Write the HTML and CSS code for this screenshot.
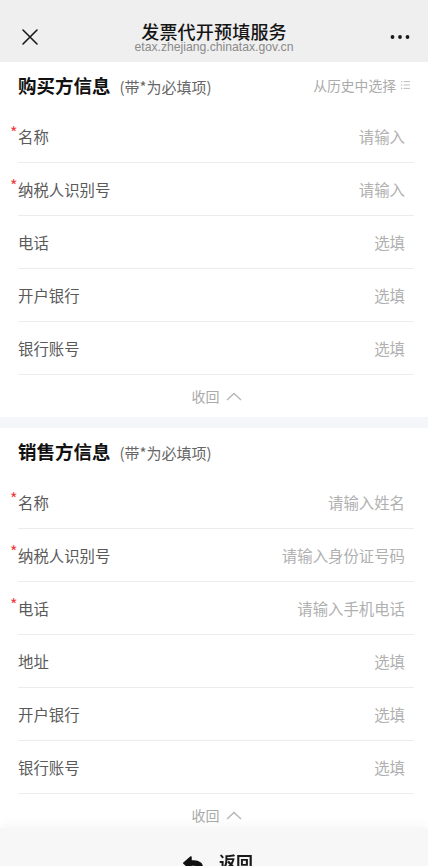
FILE: index.html
```html
<!DOCTYPE html>
<html lang="zh-CN">
<head>
<meta charset="utf-8">
<meta name="viewport" content="width=device-width, initial-scale=1">
<title>发票代开预填服务</title>
<link rel="stylesheet" href="styles.css">
</head>
<body>
<header class="topbar">
  <div class="topbar-btn">
    <svg width="18" height="18" viewBox="0 0 18 18"><path d="M2 2L16 16M16 2L2 16" stroke="#1a1a1a" stroke-width="1.6" stroke-linecap="round"/></svg>
  </div>
  <div class="topbar-title">
    <div class="title">发票代开预填服务</div>
    <div class="url">etax.zhejiang.chinatax.gov.cn</div>
  </div>
  <div class="topbar-btn right">
    <svg width="20" height="6" viewBox="0 0 20 6"><circle cx="2.5" cy="3" r="1.9" fill="#1a1a1a"/><circle cx="10" cy="3" r="1.9" fill="#1a1a1a"/><circle cx="17.5" cy="3" r="1.9" fill="#1a1a1a"/></svg>
  </div>
</header>

<main>
  <section class="card">
    <div class="card-head">
      <div class="head-left"><span class="head-title">购买方信息</span><span class="head-note">(带*为必填项)</span></div>
      <div class="history">从历史中选择
        <svg width="9" height="10" viewBox="0 0 9 10"><g fill="#bdbdbd"><rect x="0" y="1" width="1.2" height="1.2"/><rect x="0" y="4.4" width="1.2" height="1.2"/><rect x="0" y="7.8" width="1.2" height="1.2"/><rect x="2.6" y="1.1" width="6.4" height="1"/><rect x="2.6" y="4.5" width="6.4" height="1"/><rect x="2.6" y="7.9" width="6.4" height="1"/></g></svg>
      </div>
    </div>
    <div class="row"><span class="label"><i class="req">*</i>名称</span><span class="ph">请输入</span></div>
    <div class="row"><span class="label"><i class="req">*</i>纳税人识别号</span><span class="ph">请输入</span></div>
    <div class="row"><span class="label">电话</span><span class="ph">选填</span></div>
    <div class="row"><span class="label">开户银行</span><span class="ph">选填</span></div>
    <div class="row"><span class="label">银行账号</span><span class="ph">选填</span></div>
    <div class="collapse">收回
      <svg width="16" height="9" viewBox="0 0 16 9"><path d="M1 8L8 1.5L15 8" fill="none" stroke="#b5b5b5" stroke-width="1.3"/></svg>
    </div>
  </section>

  <div class="gap"></div>

  <section class="card">
    <div class="card-head">
      <div class="head-left"><span class="head-title">销售方信息</span><span class="head-note">(带*为必填项)</span></div>
    </div>
    <div class="row"><span class="label"><i class="req">*</i>名称</span><span class="ph">请输入姓名</span></div>
    <div class="row"><span class="label"><i class="req">*</i>纳税人识别号</span><span class="ph">请输入身份证号码</span></div>
    <div class="row"><span class="label"><i class="req">*</i>电话</span><span class="ph">请输入手机电话</span></div>
    <div class="row"><span class="label">地址</span><span class="ph">选填</span></div>
    <div class="row"><span class="label">开户银行</span><span class="ph">选填</span></div>
    <div class="row"><span class="label">银行账号</span><span class="ph">选填</span></div>
    <div class="collapse">收回
      <svg width="16" height="9" viewBox="0 0 16 9"><path d="M1 8L8 1.5L15 8" fill="none" stroke="#b5b5b5" stroke-width="1.3"/></svg>
    </div>
  </section>
</main>

<footer class="bottombar">
  <div class="back">
    <svg width="20" height="20" viewBox="0 0 512 512"><path fill="#111" d="M8.309 189.836L184.313 37.851C199.719 24.546 224 35.347 224 56.015v80.053c160.629 1.839 288 34.032 288 186.258 0 61.441-39.581 122.309-83.333 154.132-13.653 9.931-33.111-2.533-28.077-18.631 45.344-145.012-21.507-183.510-176.590-185.742V360c0 20.7-24.3 31.453-39.687 18.164l-176.004-152c-11.071-9.562-11.086-26.753 0-36.328z"/></svg>
    <span class="back-text">返回</span>
  </div>
</footer>
</body>
</html>
```

FILE: styles.css
```css
* { box-sizing: border-box; }
html, body { margin: 0; padding: 0; }
body {
  background: #ffffff;
  font-family: "Noto Sans CJK SC", "Noto Sans", sans-serif;
  color: #333;
  overflow: hidden;
  height: 866px;
}

.topbar {
  height: 62px;
  background: #efefef;
  display: flex;
  align-items: flex-start;
  padding: 21px 0 8px 0;
}
.topbar-btn {
  width: 60px;
  padding-top: 7px;
  padding-left: 21px;
  display: flex;
}
.topbar-btn.right {
  justify-content: flex-end;
  padding-left: 0;
  padding-right: 18px;
  padding-top: 13px;
}
.topbar-title {
  flex: 1;
  display: flex;
  flex-direction: column;
  align-items: center;
}
.title {
  font-size: 18px;
  line-height: 20px;
  font-weight: 500;
  color: #151515;
  letter-spacing: 0.2px;
}
.url {
  font-family: "Liberation Sans", "Noto Sans", sans-serif;
  font-size: 12.2px;
  line-height: 13px;
  color: #8a8a8a;
}

.card-head {
  height: 48px;
  display: flex;
  align-items: center;
  justify-content: space-between;
  padding: 0 18px 3px 18px;
}
.head-left {
  display: flex;
  align-items: baseline;
}
.head-title {
  font-size: 18.5px;
  font-weight: 700;
  color: #111;
  line-height: 24px;
}
.head-note {
  font-size: 15px;
  color: #666;
  margin-left: 9px;
  line-height: 20px;
}
.history {
  display: flex;
  align-items: center;
  gap: 5px;
  font-size: 13.8px;
  color: #ababab;
  line-height: 20px;
}

.row {
  height: 53px;
  margin: 0 14px 0 18px;
  padding-right: 9px;
  border-bottom: 1px solid #ededed;
  display: flex;
  align-items: center;
  justify-content: space-between;
}
.label {
  display: flex;
  align-items: flex-start;
  font-size: 15.4px;
  line-height: 22px;
  color: #5a5a5a;
}
.req {
  font-style: normal;
  color: #f23a3a;
  font-size: 16px;
  line-height: 12px;
  width: 8px;
  margin-left: -8px;
  margin-top: 1px;
}
.ph {
  font-size: 15.4px;
  line-height: 22px;
  color: #b0b0b0;
}

.collapse {
  height: 42px;
  display: flex;
  align-items: center;
  justify-content: center;
  gap: 6px;
  font-size: 14px;
  color: #aaaaaa;
  padding-left: 5px;
}

.gap {
  height: 11px;
  background: #f5f6fa;
}

.bottombar {
  position: fixed;
  left: 0;
  right: 0;
  bottom: 0;
  height: 38px;
  background: #f7f7f7;
  box-shadow: 0 -4px 10px rgba(0, 0, 0, 0.035);
  overflow: hidden;
  padding-top: 24px;
}
.back {
  display: flex;
  align-items: flex-start;
  justify-content: center;
  gap: 16px;
  padding-left: 8px;
}
.back svg { margin-top: 3px; }
.back-text {
  font-size: 17px;
  font-weight: 700;
  line-height: 20px;
  color: #1a1a1a;
}
```
